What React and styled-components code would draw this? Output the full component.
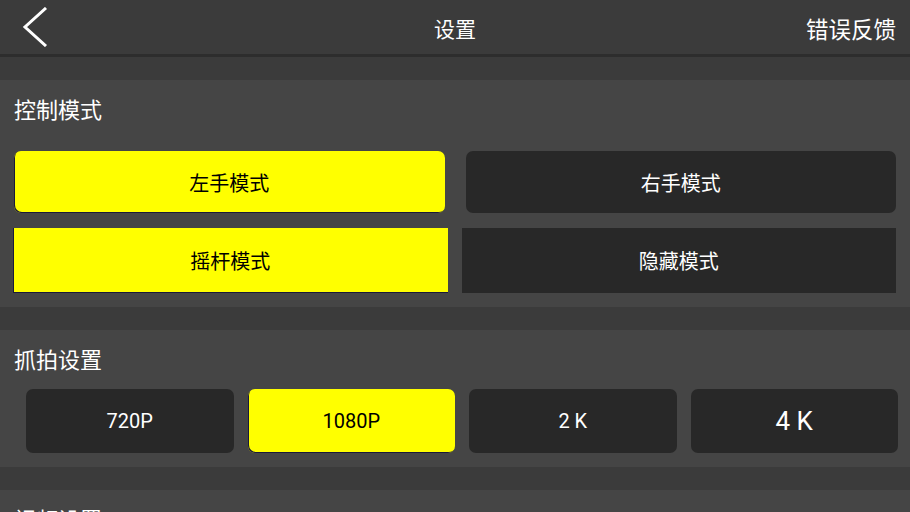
import React from 'react';
import styled, { createGlobalStyle } from 'styled-components';

const GlobalStyle = createGlobalStyle`
  html, body {
    margin: 0;
    padding: 0;
    background: #3b3b3b;
    overflow: hidden;
  }
  body {
    font-family: "Noto Sans CJK SC", "Noto Sans", sans-serif;
  }
`;

const Page = styled.div`
  width: 910px;
  height: 512px;
  overflow: hidden;
  background: #3b3b3b;
  display: flex;
  flex-direction: column;
`;

const TopBar = styled.div`
  height: 54px;
  flex-shrink: 0;
  background: #3b3b3b;
  border-bottom: 3px solid #2d2d2d;
  display: grid;
  grid-template-columns: 1fr auto 1fr;
  align-items: center;
  color: #fff;
`;

const BackButton = styled.button`
  justify-self: start;
  background: none;
  border: none;
  padding: 0 0 0 22px;
  height: 54px;
  display: flex;
  align-items: center;
  cursor: pointer;
`;

const Title = styled.div`
  font-size: 21px;
  padding-top: 1px;
`;

const Feedback = styled.div`
  justify-self: end;
  font-size: 22.5px;
  padding: 1px 14px 0 0;
`;

const Content = styled.div`
  padding-top: 23px;
  display: flex;
  flex-direction: column;
  gap: 23px;
`;

const Section = styled.div`
  background: #454545;
  padding-bottom: 14px;
  flex-shrink: 0;
`;

const SectionTitle = styled.div`
  height: ${(p) => p.$h || 60}px;
  box-sizing: border-box;
  padding: 0 0 4px 14px;
  display: flex;
  align-items: center;
  color: #fff;
  font-size: 22px;
  line-height: 1;
`;

const Row = styled.div`
  display: grid;
  grid-template-columns: 1fr 1fr;
  gap: ${(p) => p.$gap}px;
  padding: 0 ${(p) => p.$right}px 0 ${(p) => p.$left}px;
  margin-top: ${(p) => p.$top || 0}px;
`;

const QuadRow = styled.div`
  display: grid;
  grid-template-columns: repeat(4, 1fr);
  gap: 14px;
  padding: 0 12px 0 26px;
`;

const Option = styled.button`
  height: ${(p) => p.$h}px;
  border-radius: ${(p) => (p.$square ? 0 : 7)}px;
  border: none;
  box-sizing: border-box;
  background: ${(p) => (p.$active ? '#ffff00' : '#282828')};
  color: ${(p) => (p.$active ? '#000' : '#fff')};
  box-shadow: ${(p) => (p.$active ? 'inset 1px -1px 0 #1a1a3a' : 'none')};
  font-family: "Noto Sans CJK SC", sans-serif;
  font-size: 20px;
  display: flex;
  align-items: center;
  justify-content: center;
  padding: 0;
  cursor: pointer;
`;

const ResOption = styled(Option)`
  font-family: Roboto, "Noto Sans", sans-serif;
  font-size: ${(p) => p.$fs || 20}px;
`;

const modes = [
  [
    { label: '左手模式', active: true },
    { label: '右手模式', active: false },
  ],
  [
    { label: '摇杆模式', active: true },
    { label: '隐藏模式', active: false },
  ],
];

const resolutions = [
  { label: '720P', active: false },
  { label: '1080P', active: true },
  { label: '2 K', active: false, fs: 20 },
  { label: '4 K', active: false, fs: 26 },
];

const App = () => {
  return (
    <Page>
      <GlobalStyle />
      <TopBar>
        <BackButton aria-label="返回">
          <svg width="26" height="40" viewBox="0 0 26 40">
            <polyline points="24,1 3,20 24,39" fill="none" stroke="#fff" strokeWidth="3" />
          </svg>
        </BackButton>
        <Title>设置</Title>
        <Feedback>错误反馈</Feedback>
      </TopBar>
      <Content>
        <Section>
          <SectionTitle>控制模式</SectionTitle>
          <Row $gap={21} $left={14} $right={14} $top={11}>
            {modes[0].map((m) => (
              <Option key={m.label} $h={62} $active={m.active}>{m.label}</Option>
            ))}
          </Row>
          <Row $gap={14} $left={13} $right={14} $top={15}>
            {modes[1].map((m) => (
              <Option key={m.label} $h={65} $square $active={m.active}>{m.label}</Option>
            ))}
          </Row>
        </Section>
        <Section>
          <SectionTitle $h={59}>抓拍设置</SectionTitle>
          <QuadRow>
            {resolutions.map((r) => (
              <ResOption key={r.label} $h={64} $fs={r.fs} $active={r.active}>{r.label}</ResOption>
            ))}
          </QuadRow>
        </Section>
        <Section>
          <SectionTitle>视频设置</SectionTitle>
        </Section>
      </Content>
    </Page>
  );
};

export default App;
